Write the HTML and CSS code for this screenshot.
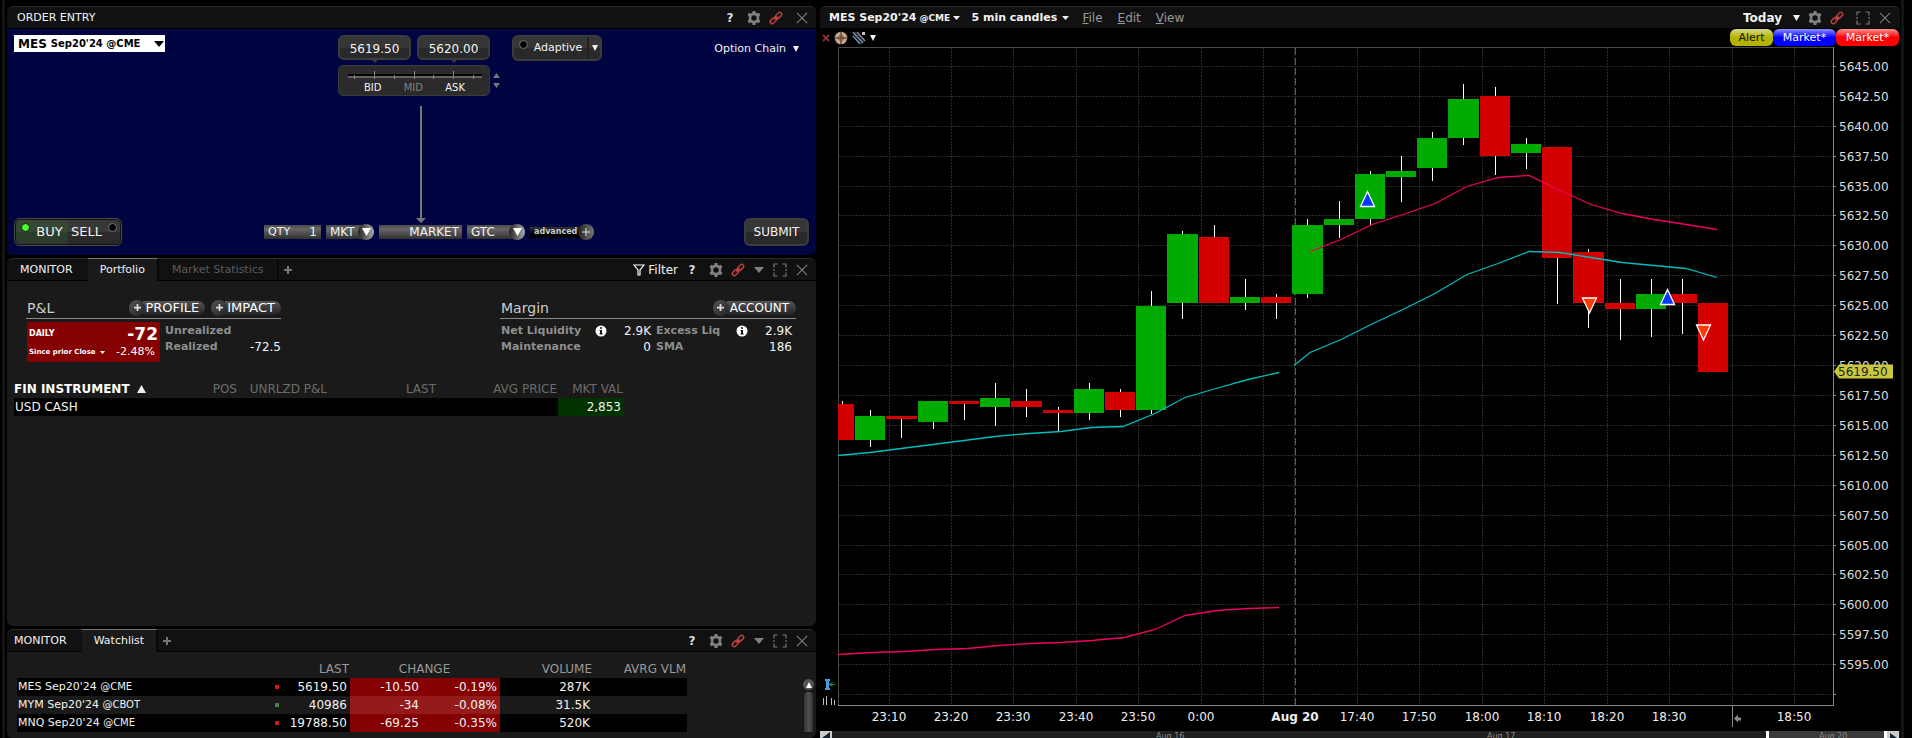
FILE: index.html
```html
<!DOCTYPE html>
<html lang="en">
<head>
<meta charset="utf-8">
<title>Trading workspace</title>
<link rel="stylesheet" href="styles.css">
</head>
<body>
<svg class="defs" aria-hidden="true">
  <defs>
    <symbol id="gear" viewBox="0 0 14 14">
      <path d="M5.600 0h2.800l.4 1.900 1.200.6 1.800-.8 1.600 2.200-1.200 1.500v3.200l1.200 1.500-1.600 2.200-1.800-.8-1.200.6-.4 1.900H5.600l-.4-1.900-1.200-.6-1.800.8L.6 10.100l1.200-1.500V5.400L.6 3.900l1.600-2.200 1.800.8 1.200-.6zM7 4.300a2.700 2.700 0 1 0 0 5.400 2.700 2.700 0 0 0 0-5.400z" fill="#808080" fill-rule="evenodd"/>
    </symbol>
    <symbol id="link" viewBox="0 0 14 14">
      <g fill="none" stroke="#d04444" stroke-width="1.300">
        <rect x="-3.600" y="-2" width="7.200" height="4" rx="2" transform="translate(9.600 4.400) rotate(-45)"/>
        <rect x="-3.600" y="-2" width="7.200" height="4" rx="2" transform="translate(4.400 9.600) rotate(-45)"/>
        <path d="M5.200 8.800l3.600-3.600"/>
      </g>
    </symbol>
    <symbol id="expand" viewBox="0 0 14 14">
      <path d="M1 4.500V1h3.500M9.500 1H13v3.500M13 9.500V13H9.500M4.500 13H1V9.500M1 6v2M13 6v2" fill="none" stroke="#777" stroke-width="1.200"/>
    </symbol>
    <symbol id="close" viewBox="0 0 14 14">
      <path d="M1 1l12 12M13 1L1 13" fill="none" stroke="#808080" stroke-width="1.200"/>
    </symbol>
    <symbol id="down" viewBox="0 0 10 6" preserveAspectRatio="none"><path d="M0 0h10L5 6z" fill="currentColor"/></symbol>
    <symbol id="up" viewBox="0 0 10 8" preserveAspectRatio="none"><path d="M0 8h10L5 0z" fill="currentColor"/></symbol>
    <symbol id="plus" viewBox="0 0 8 8"><path d="M4 0v8M0 4h8" stroke="currentColor"/></symbol>
    <symbol id="info" viewBox="0 0 12 12">
      <circle cx="6" cy="6" r="5.500" fill="#fff"/><path d="M5 2.200h2v1.600H5zM4.500 5H7v3.600h.7v1H4.400v-1H5V6h-.5z" fill="#111"/>
    </symbol>
    <symbol id="funnel" viewBox="0 0 12 12">
      <path d="M1 1h10L7 6v5H5V6z" fill="none" stroke="#fff" stroke-width="1.200"/>
    </symbol>
  </defs>
</svg>

<main class="workspace">
  <div class="column">
    <section class="panel order">
      <header class="bar">
        <h2 class="bar-title">ORDER ENTRY</h2>
        <div class="tools">
          <button class="tool help" aria-label="Help">?</button>
          <button class="tool" aria-label="Settings"><svg class="i14"><use href="#gear"/></svg></button>
          <button class="tool" aria-label="Link group"><svg class="i14"><use href="#link"/></svg></button>
          <button class="tool late" aria-label="Close"><svg class="i12"><use href="#close"/></svg></button>
        </div>
      </header>
      <div class="order-body">
        <div class="order-side">
          <div class="contract">
            <label for="contract">MES</label>
            <select id="contract"><option>Sep20'24 @CME</option></select>
            <svg class="tri"><use href="#down"/></svg>
          </div>
          <div class="sides">
            <button class="side buy"><span class="dot on"></span>BUY</button>
            <button class="side sell">SELL<span class="dot"></span></button>
          </div>
        </div>

        <div class="order-main">
          <div class="quote-row">
            <div class="ladder">
              <div class="prices">
                <button class="price">5619.50</button>
                <button class="price">5620.00</button>
              </div>
              <div class="scale">
                <svg class="scale-line" viewBox="0 0 134 9">
                  <path d="M0 4h134" stroke="#000" stroke-width="2"/>
                  <path d="M0 6h134" stroke="#777" stroke-width="1.500"/>
                  <path d="M26.500 0v8M66.500 0v8M105.500 0v8M6.500 4v4M46.500 4v4M85.500 4v4M125.500 4v4" stroke="#888"/>
                </svg>
                <div class="marks"><span>BID</span><span class="dim">MID</span><span>ASK</span></div>
              </div>
            </div>
            <div class="stepper">
              <button aria-label="Raise price"><svg class="step"><use href="#up"/></svg></button>
              <button aria-label="Lower price"><svg class="step"><use href="#down"/></svg></button>
            </div>
            <div class="algo">
              <button class="algo-name"><span class="dot"></span>Adaptive</button>
              <button class="algo-more" aria-label="Choose algo"><svg class="tri-s"><use href="#down"/></svg></button>
            </div>
          </div>
          <div class="pointer"><span class="shaft"></span><svg class="head"><use href="#down"/></svg></div>
          <div class="params">
            <div class="field qty"><label for="qty">QTY</label><input id="qty" value="1"></div>
            <div class="field type"><select aria-label="Order type"><option>MKT</option></select><span class="knob"><svg class="tri"><use href="#down"/></svg></span></div>
            <div class="field limit"><input aria-label="Price" value="MARKET"></div>
            <div class="field tif"><select aria-label="Time in force"><option>GTC</option></select><span class="knob"><svg class="tri"><use href="#down"/></svg></span></div>
            <button class="advanced"><span>advanced</span><span class="knob plain"><svg class="plus"><use href="#plus"/></svg></span></button>
          </div>
        </div>

        <div class="order-side end">
          <button class="chain">Option Chain <svg class="tri-s"><use href="#down"/></svg></button>
          <button class="submit">SUBMIT</button>
        </div>
      </div>
    </section>

    <section class="panel portfolio">
      <header class="bar tabs">
        <h2 class="bar-title mon-a">MONITOR</h2>
        <button class="tab active">Portfolio</button>
        <button class="tab">Market Statistics</button>
        <button class="add" aria-label="Add tab"><svg class="plus"><use href="#plus"/></svg></button>
        <div class="tools">
          <button class="filter"><svg class="i12"><use href="#funnel"/></svg>Filter</button>
          <button class="tool help" aria-label="Help">?</button>
          <button class="tool" aria-label="Settings"><svg class="i14"><use href="#gear"/></svg></button>
          <button class="tool" aria-label="Link group"><svg class="i14"><use href="#link"/></svg></button>
          <button class="tool more" aria-label="Menu"><svg class="tri"><use href="#down"/></svg></button>
          <button class="tool" aria-label="Maximize"><svg class="i14"><use href="#expand"/></svg></button>
          <button class="tool" aria-label="Close"><svg class="i12"><use href="#close"/></svg></button>
        </div>
      </header>
      <div class="summary">
        <div class="pnl">
          <div class="sum-head"><h3>P&amp;L</h3>
            <button class="pill"><span class="knob plain"><svg class="plus-s"><use href="#plus"/></svg></span><span class="pill-text">PROFILE</span></button>
            <button class="pill"><span class="knob plain"><svg class="plus-s"><use href="#plus"/></svg></span><span class="pill-text">IMPACT</span></button>
          </div>
          <div class="pnl-body">
            <div class="daily">
              <div class="daily-row"><span>DAILY</span><strong>-72</strong></div>
              <div class="daily-row"><span class="since">Since prior Close <svg class="tri-x"><use href="#down"/></svg></span><em>-2.48%</em></div>
            </div>
            <dl class="facts">
              <dt>Unrealized</dt><dd></dd>
              <dt>Realized</dt><dd>-72.5</dd>
            </dl>
          </div>
        </div>
        <div class="margin">
          <div class="sum-head"><h3>Margin</h3>
            <button class="pill"><span class="knob plain"><svg class="plus-s"><use href="#plus"/></svg></span><span class="pill-text">ACCOUNT</span></button>
          </div>
          <dl class="facts four">
            <dt>Net Liquidity</dt><dd><svg class="i12"><use href="#info"/></svg>2.9K</dd>
            <dt>Excess Liq</dt><dd><svg class="i12"><use href="#info"/></svg>2.9K</dd>
            <dt>Maintenance</dt><dd>0</dd>
            <dt>SMA</dt><dd>186</dd>
          </dl>
        </div>
      </div>
      <table class="grid positions">
        <colgroup><col class="p1"><col class="p2"><col class="p3"><col class="p4"><col class="p5"><col class="p6"></colgroup>
        <thead><tr><th class="name">FIN INSTRUMENT <svg class="sort"><use href="#up"/></svg></th><th>POS</th><th>UNRLZD P&amp;L</th><th>LAST</th><th>AVG PRICE</th><th>MKT VAL</th></tr></thead>
        <tbody><tr class="dark"><td class="name">USD CASH</td><td></td><td></td><td></td><td></td><td class="val">2,853</td></tr></tbody>
      </table>
    </section>

    <section class="panel watch">
      <header class="bar tabs">
        <h2 class="bar-title mon-b">MONITOR</h2>
        <button class="tab active">Watchlist</button>
        <button class="add" aria-label="Add tab"><svg class="plus"><use href="#plus"/></svg></button>
        <div class="tools">
          <button class="tool help" aria-label="Help">?</button>
          <button class="tool" aria-label="Settings"><svg class="i14"><use href="#gear"/></svg></button>
          <button class="tool" aria-label="Link group"><svg class="i14"><use href="#link"/></svg></button>
          <button class="tool more" aria-label="Menu"><svg class="tri"><use href="#down"/></svg></button>
          <button class="tool" aria-label="Maximize"><svg class="i14"><use href="#expand"/></svg></button>
          <button class="tool" aria-label="Close"><svg class="i12"><use href="#close"/></svg></button>
        </div>
      </header>
      <div class="watch-body">
        <table class="grid quotes">
          <colgroup><col class="w1"><col class="w2"><col class="w3"><col class="w4"><col class="w5"><col class="w6"><col class="w7"></colgroup>
          <thead><tr><th></th><th></th><th>LAST</th><th colspan="2" class="mid">CHANGE</th><th>VOLUME</th><th>AVRG VLM</th></tr></thead>
          <tbody>
            <tr class="dark"><td class="name">MES Sep20'24 <small>@CME</small></td><td><i class="tick"></i></td><td>5619.50</td><td class="neg">-10.50</td><td class="neg">-0.19%</td><td>287K</td><td></td></tr>
            <tr><td class="name">MYM Sep20'24 <small>@CBOT</small></td><td><i class="tick upt"></i></td><td>40986</td><td class="neg">-34</td><td class="neg">-0.08%</td><td>31.5K</td><td></td></tr>
            <tr class="dark"><td class="name">MNQ Sep20'24 <small>@CME</small></td><td><i class="tick"></i></td><td>19788.50</td><td class="neg">-69.25</td><td class="neg">-0.35%</td><td>520K</td><td></td></tr>
          </tbody>
        </table>
        <div class="vscroll"><button aria-label="Scroll up"><svg class="tri-s"><use href="#up"/></svg></button><span></span></div>
      </div>
    </section>
  </div>

  <section class="chart">
    <header class="bar chart-bar">
      <div class="pick sym"><label for="sym">MES Sep20'24</label><select id="sym"><option>@CME</option></select><svg class="tri-m"><use href="#down"/></svg></div>
      <div class="pick period"><select aria-label="Bar size"><option>5 min candles</option></select><svg class="tri-m"><use href="#down"/></svg></div>
      <nav class="menu"><a href="#file"><u>F</u>ile</a><a href="#edit"><u>E</u>dit</a><a href="#view"><u>V</u>iew</a></nav>
      <div class="tools">
        <div class="pick today"><select aria-label="Range"><option>Today</option></select><svg class="tri-m"><use href="#down"/></svg></div>
        <button class="tool" aria-label="Settings"><svg class="i14"><use href="#gear"/></svg></button>
        <button class="tool" aria-label="Link group"><svg class="i14"><use href="#link"/></svg></button>
        <button class="tool late" aria-label="Maximize"><svg class="i14"><use href="#expand"/></svg></button>
        <button class="tool" aria-label="Close"><svg class="i12"><use href="#close"/></svg></button>
      </div>
    </header>
    <div class="chart-tools">
      <button class="mini" aria-label="Clear drawings"><svg class="clear" viewBox="0 0 6 6"><path d="M0 0l6 6M6 0L0 6" stroke="#8a3030" stroke-width="1.800"/></svg></button>
      <button class="mini" aria-label="Crosshair"><svg class="i14" viewBox="0 0 14 14"><circle cx="7" cy="7" r="6.300" fill="#c9a486"/><path d="M7 1v12M1 7h12" stroke="#3a2a20"/><circle cx="7" cy="7" r="2.500" fill="none" stroke="#6a5040"/></svg></button>
      <button class="mini" aria-label="Draw lines"><svg class="i14" viewBox="0 0 14 14"><path d="M1 1l10 11M5 1l8 9M1 5l7 8" stroke="#8494a4" stroke-width="1.300"/><path d="M3 1l9 10M1 3l9 10" stroke="#34424e"/><path d="M10 1h3v3h-3z" fill="#d8b8b8"/></svg></button>
      <button class="mini" aria-label="More tools"><svg class="tri-s"><use href="#down"/></svg></button>
      <div class="quick">
        <button class="alert">Alert</button><button class="bid">Market*</button><button class="ask">Market*</button>
      </div>
    </div>
    <svg class="plot" viewBox="820 47 1080 684" preserveAspectRatio="xMinYMin meet" role="img" aria-label="MES five minute candles">
      <g class="gridlines">
        <path d="M838 66.500H1833M838 96.500H1833M838 126.500H1833M838 156.500H1833M838 186.500H1833M838 215.500H1833M838 245.500H1833M838 275.500H1833M838 305.500H1833M838 335.500H1833M838 365.500H1833M838 395.500H1833M838 425.500H1833M838 455.500H1833M838 485.500H1833M838 515.500H1833M838 545.500H1833M838 574.500H1833M838 604.500H1833M838 634.500H1833M838 664.500H1833M838 694.500H1833"/>
        <path d="M889.500 48V705M951.500 48V705M1013.500 48V705M1076.500 48V705M1138.500 48V705M1201.500 48V705M1263.500 48V705M1294.500 48V705M1357.500 48V705M1419.500 48V705M1482.500 48V705M1544.500 48V705M1607.500 48V705M1669.500 48V705M1732.500 48V705M1794.500 48V705"/>
      </g>
      <path class="session" d="M1295.500 48V705"/>
      <path class="frame" d="M838.500 705V47.500H1833"/>
      <path class="axis" d="M838 705.500H1833.500V47M1732.500 705V727"/>
      <path class="axis" d="M1834 66.500h2M1834 96.500h2M1834 126.500h2M1834 156.500h2M1834 186.500h2M1834 215.500h2M1834 245.500h2M1834 275.500h2M1834 305.500h2M1834 335.500h2M1834 365.500h2M1834 395.500h2M1834 425.500h2M1834 455.500h2M1834 485.500h2M1834 515.500h2M1834 545.500h2M1834 574.500h2M1834 604.500h2M1834 634.500h2M1834 664.500h2M1834 694.500h2"/>
      <path class="wick" d="M842.500 401V404M870.500 410V447M901.500 416V438M933.500 401V429M964.500 401V420M995.500 383V426M1026.500 389V417M1058.500 407V431M1089.500 383V420M1120.500 389V417M1151.500 291V414M1182.500 231V319M1214.500 225V303M1245.500 279V310M1276.500 294V319M1307.500 219V298M1339.500 201V238M1370.500 171V225M1401.500 156V202M1432.500 132V181M1463.500 84V145M1495.500 87V175M1526.500 138V169M1557.500 147V304M1588.500 249V328M1620.500 279V340M1651.500 279V337M1682.500 279V334"/>
      <path class="gain" d="M855 416h30v24h-30zM918 401h30v21h-30zM980 398h30v9h-30zM1074 389h30v24h-30zM1136 306h30v104h-30zM1167 234h31v69h-31zM1230 297h30v6h-30zM1292 225h31v69h-31zM1324 219h30v6h-30zM1355 174h30v45h-30zM1386 171h30v6h-30zM1417 138h30v30h-30zM1448 99h31v39h-31zM1511 144h30v9h-30zM1636 294h30v15h-30z"/>
      <path class="loss" d="M838 404h16v36h-16zM886 416h31v3h-31zM949 401h30v3h-30zM1011 401h31v6h-31zM1043 410h30v3h-30zM1105 392h30v18h-30zM1199 237h30v66h-30zM1261 297h30v6h-30zM1480 96h30v60h-30zM1542 147h30v111h-30zM1573 252h31v51h-31zM1605 303h30v6h-30zM1667 294h30v9h-30zM1698 303h30v69h-30z"/>
      <polyline class="vwap" points="838,455.500 870,452.500 901,448.500 933,444.500 964,440.500 995,436.500 1029,433.500 1061,431.500 1091,427.500 1123,426.500 1155,413.500 1185,397.500 1216,388.500 1248,379.500 1279,372.500"/>
      <polyline class="vwap" points="1294,365.500 1310,352.500 1341,339.500 1372,324 1403,309.500 1435,293.500 1467,274.500 1498,263.500 1529,251.500 1560,252.500 1591,257.500 1622,262.500 1654,265.500 1686,268.500 1717,277.500"/>
      <polyline class="band" points="1310,251.500 1341,239.500 1372,224.500 1403,214.500 1435,203.500 1467,186.500 1498,177.500 1529,175.500 1560,190.500 1591,204.500 1622,213.500 1654,219.500 1686,224.500 1717,229.500"/>
      <polyline class="band" points="838,654.500 873,652.500 904,651.500 936,649.500 968,648.500 999,645.500 1031,643.500 1061,642.500 1092,640.500 1124,637.500 1155,629.500 1185,615.500 1217,610.500 1248,608.500 1279,607.500"/>
      <path class="bought" d="M1367.500 191.500l7 15h-14zM1667.500 289.500l7 15h-14z"/>
      <path class="sold" d="M1582.500 298h14l-7 15zM1696.500 325h14l-7 15z"/>
      <g class="prices-axis">
        <text x="1839" y="71">5645.00</text><text x="1839" y="101">5642.50</text><text x="1839" y="131">5640.00</text><text x="1839" y="161">5637.50</text><text x="1839" y="191">5635.00</text><text x="1839" y="220">5632.50</text><text x="1839" y="250">5630.00</text><text x="1839" y="280">5627.50</text><text x="1839" y="310">5625.00</text><text x="1839" y="340">5622.50</text><text x="1839" y="370">5620.00</text><text x="1839" y="400">5617.50</text><text x="1839" y="430">5615.00</text><text x="1839" y="460">5612.50</text><text x="1839" y="490">5610.00</text><text x="1839" y="520">5607.50</text><text x="1839" y="550">5605.00</text><text x="1839" y="579">5602.50</text><text x="1839" y="609">5600.00</text><text x="1839" y="639">5597.50</text><text x="1839" y="669">5595.00</text>
      </g>
      <path class="tag" d="M1834 371.500l5-7h54v14h-54z"/>
      <text class="tag-text" x="1838" y="376">5619.50</text>
      <g class="times">
        <text x="889" y="721">23:10</text><text x="951" y="721">23:20</text><text x="1013" y="721">23:30</text><text x="1076" y="721">23:40</text><text x="1138" y="721">23:50</text><text x="1201" y="721">0:00</text><text class="day" x="1295" y="721">Aug 20</text><text x="1357" y="721">17:40</text><text x="1419" y="721">17:50</text><text x="1482" y="721">18:00</text><text x="1544" y="721">18:10</text><text x="1607" y="721">18:20</text><text x="1669" y="721">18:30</text><text x="1794" y="721">18:50</text>
      </g>
      <path d="M1734 718.500l4-4v3h3v3h-3v2z" fill="#888"/>
      <path d="M825 679h5v2h-1v7h1v2h-5v-2h1v-7h-1z" fill="#4a9ae0"/>
      <path d="M829 684.500h6M832.500 682.500l-2.500 2 2.500 2" stroke="#18a040" fill="none"/>
      <path d="M823.500 698v7M826.500 696v9M831.500 698v7M834.500 700v5" stroke="#bbb"/>
    </svg>
    <div class="hscroll">
      <button aria-label="Scroll left"><svg viewBox="0 0 12 12" class="i12"><path d="M10 1v10L2 7z" fill="#123"/></svg></button>
      <span class="date first">Aug 16</span><span class="date second">Aug 17</span><span class="window">Aug 20</span>
      <button aria-label="Scroll right"><svg viewBox="0 0 12 12" class="i12"><path d="M3 2v10l7-5z" fill="#123"/></svg></button>
    </div>
  </section>
</main>
</body>
</html>
```
FILE: styles.css
```css
* { box-sizing: border-box; }
body {
  margin: 0;
  background: #000;
  color: #f2f2f2;
  font: 12px/16px "DejaVu Sans", Verdana, sans-serif;
}
button, input, select {
  margin: 0; padding: 0; border: 0;
  background: none; color: inherit; font: inherit;
  appearance: none; border-radius: 0; outline: 0;
}
button { display: flex; align-items: center; justify-content: center; }
h2, h3, dl, dd { margin: 0; font-weight: normal; }
svg { display: block; flex: none; overflow: visible; }
.defs { position: absolute; width: 0; height: 0; }

.i14 { width: 14px; height: 14px; }
.i12 { width: 12px; height: 12px; }
.tri { width: 10px; height: 6px; }
.tri-m { width: 7px; height: 4px; }
.tri-s { width: 6px; height: 6px; }
.tri-x { width: 5px; height: 3px; }
.plus { width: 8px; height: 8px; stroke-width: 2px; }
.plus-s { width: 7px; height: 7px; stroke-width: 2px; }
.sort { width: 9px; height: 8px; color: #eee; }
.step { width: 7px; height: 5px; color: #777; }

.workspace {
  display: grid;
  grid-template-columns: 809fr 1080fr;
  column-gap: 4px;
  height: 100vh;
  padding: 6px 12px 0 7px;
  overflow: hidden;
  background:
    linear-gradient(#141414, #141414) 2px 0 / 3px 100% no-repeat,
    linear-gradient(#141414, #141414) calc(100% - 8px) 0 / 3px 100% no-repeat,
    #000;
}
.column { display: grid; grid-template-rows: auto 1fr auto; row-gap: 3px; min-width: 0; min-height: 0; }
.panel { border-radius: 6px; overflow: hidden; background: #1a1a1a; display: flex; flex-direction: column; }

.bar {
  display: flex; align-items: center;
  height: 23px;
  background: #111;
  border-top: 1px solid #2c2c2c;
  border-bottom: 1px solid #000;
  border-radius: 6px 6px 0 0;
}
.bar-title { font-size: 11px; line-height: 16px; padding: 0 10px; }
.bar-title.mon-a { padding: 0 15px 0 13px; }
.bar-title.mon-b { padding: 0 15px 0 7px; }
.tabs { align-items: stretch; }
.tabs .bar-title { line-height: 21px; }
.tab { font-size: 11px; color: #5c5c5c; padding: 0 13px; border-right: 2px solid #080808; }
.tab.active { color: #f2f2f2; background: #1a1a1a; border-top: 1px solid #777; padding: 0 12px; margin: -1px 0; }
.add { color: #777; padding: 0 5px; }
.tools { display: flex; align-items: center; margin-left: auto; padding-right: 3px; }
.tool { width: 22px; height: 16px; color: #808080; }
.tool.help { width: 26px; color: #ddd; font-weight: bold; }
.tool.more { width: 20px; }
.tool.late { margin-left: 4px; }
.filter { gap: 3px; margin-right: 1px; }

.order-body {
  display: grid; grid-template-columns: 250fr auto 207fr;
  height: 226px;
  padding: 6px 7px 9px;
  background: #000542;
}
.order-side { display: flex; flex-direction: column; justify-content: space-between; align-items: flex-start; }
.order-side.end { align-items: flex-end; }
.contract {
  display: flex; align-items: center;
  width: 151px; height: 17px; padding: 0 1px 0 4px; gap: 4px;
  background: #fff; color: #000; font-weight: bold;
}
.contract select { flex: 1; min-width: 0; font-size: 10px; }

.sides {
  display: flex; width: 108px; height: 28px; padding: 1px;
  border: 1px solid #4a4a4a; border-radius: 6px; background: #111;
  font-size: 13px;
}
.side { flex: 1; border-radius: 0 4px 4px 0; background: linear-gradient(#383838 50%, #2a2a2a 50%); gap: 6px; }
.side.buy { border-radius: 4px 0 0 4px; background: linear-gradient(#364736 50%, #2b3c2b 50%); }
.dot { width: 9px; height: 9px; border-radius: 50%; background: #000; border: 1px solid #777; align-self: flex-start; margin-top: 3px; flex: none; }
.dot.on { background: #4cff30; border-color: #062006; }

.order-main { display: flex; flex-direction: column; }
.quote-row { display: flex; padding-left: 74px; align-items: flex-start; }
.ladder { width: 152px; }
.prices { display: flex; justify-content: space-between; }
.price, .submit, .algo {
  border: 2px solid #3c3c3c; border-radius: 6px;
  background: linear-gradient(#363636 50%, #292929 50%);
}
.price { position: relative; width: 73px; height: 25px; padding-top: 2px; }
.price::after {
  content: ""; position: absolute; left: 50%; top: 100%; margin-left: -4px;
  border: 4px solid transparent; border-top-color: #3c3c3c; border-bottom: 0;
  margin-top: 1px;
}
.scale { margin-top: 5px; height: 31px; border-radius: 5px; background: #2b2b2b; border: 1px solid #3a3a3a; padding: 5px 7px 0 9px; }
.scale-line { width: 100%; height: 9px; }
.marks { display: flex; justify-content: space-between; padding: 0 17px 0 16px; font-size: 10px; }
.marks .dim { color: #808080; }
.stepper { display: flex; flex-direction: column; gap: 5px; padding: 38px 0 0 3px; }
.algo { display: flex; width: 90px; height: 26px; margin-left: 12px; font-size: 11px; }
.algo-name { flex: 1; gap: 6px; }
.algo-more { width: 13px; border-left: 2px solid #222; }

.pointer { flex: 1; width: 10px; margin: 10px 0 1px 152px; display: flex; flex-direction: column; align-items: center; color: #777; }
.shaft { flex: 1; width: 2px; background: #777; }
.head { width: 10px; height: 5px; }

.params { display: flex; align-items: center; height: 16px; margin-bottom: 6px; }
.field { display: flex; align-items: center; height: 14px; background: linear-gradient(#4a4a4a, #666 30%, #303030); }
.field input { min-width: 0; width: 100%; text-align: right; line-height: 14px; height: 14px; }
.field label { font-size: 11px; }
.field select { flex: 1; height: 14px; line-height: 14px; min-width: 0; }
.qty { width: 57px; padding: 0 4px; margin-right: 5px; }
.type { width: 40px; padding-left: 4px; margin-right: 13px; }
.limit { width: 83px; padding-right: 3px; margin-right: 5px; }
.tif { width: 50px; padding-left: 4px; margin-right: 13px; }
.knob {
  width: 16px; height: 16px; border-radius: 50%; flex: none;
  display: flex; align-items: center; justify-content: center;
  background: linear-gradient(90deg, #222, #aaa); color: #fff; margin-right: -8px;
}
.knob .tri { width: 9px; height: 8px; }
.knob.plain { background: linear-gradient(135deg, #555, #222); color: #ddd; margin: 0; }
.advanced { height: 14px; font-size: 8px; font-weight: bold; color: #ccc; }
.advanced > span:first-child { background: linear-gradient(#333, #000 60%); padding: 0 3px 0 4px; height: 11px; line-height: 9px; }
.advanced .knob { margin-left: -2px; background: linear-gradient(90deg, #222, #777); }
.advanced .plus { stroke-width: 1px; }
.chain { font-size: 11px; gap: 7px; padding: 6px 10px 0 0; }
.submit { width: 65px; height: 28px; }

.summary { display: flex; justify-content: space-between; padding: 16px 20px 0 19px; }
.pnl { width: 255px; }
.margin { width: 296px; }
.sum-head { display: flex; align-items: center; gap: 6px; height: 22px; border-bottom: 1px solid #888; color: #ccc; }
.sum-head h3 { flex: 1; padding-left: 1px; }
.pill { color: #fff; height: 16px; }
.pill-text { height: 14px; line-height: 14px; padding: 0 7px 0 3px; margin-left: -2px; border-radius: 0 7px 7px 0; background: linear-gradient(#555, #222); }
.pnl .pill-text { font-size: 13px; padding: 0 6px 0 2px; }
.pill .knob { z-index: 1; }
.pnl-body { display: flex; padding: 3px 0 0 1px; }
.daily { width: 133px; height: 40px; padding: 3px 2px 0; background: #850000; color: #fff; font-weight: bold; font-size: 8px; }
.daily-row { display: flex; justify-content: space-between; align-items: center; height: 18px; }
.daily-row span { display: flex; align-items: center; gap: 4px; }
.daily-row .since { font-size: 7px; }
.daily-row strong { font-size: 17px; }
.daily-row em { font: 11px/16px "DejaVu Sans", Verdana, sans-serif; padding-right: 3px; }
.facts { display: grid; grid-template-columns: auto 1fr; flex: 1; padding-left: 5px; }
.facts dt { font-size: 11px; font-weight: bold; color: #8c8f8c; }
.facts dd { display: flex; justify-content: flex-end; align-items: center; gap: 17px; color: #f2f2f2; }
.pnl .facts { align-content: start; padding-top: 1px; }
.facts.four { grid-template-columns: 84px 65px 72px 67px; padding: 4px 0 0 1px; column-gap: 1px; }
.facts.four dt:nth-of-type(even) { padding-left: 4px; }

.grid { border-collapse: collapse; table-layout: fixed; line-height: 18px; }
.grid th, .grid td { padding: 0 3px 0 0; height: 18px; text-align: right; white-space: nowrap; }
.grid th { font-weight: normal; color: #999; padding-right: 1px; }
.grid th.mid { text-align: center; }
.grid .name { text-align: left; padding-left: 1px; }
.grid .dark { background: #000; }
.positions { width: 610px; margin: 18px 0 0 7px; }
.positions th { color: #6c6c6c; }
.positions th.name { color: #fff; font-weight: bold; padding-left: 0; }
.positions .sort { display: inline-block; margin-left: 3px; }
.positions .val { background: #003300; }
.p1 { width: 180px; } .p2 { width: 44px; } .p3 { width: 90px; } .p4 { width: 109px; } .p5 { width: 121px; } .p6 { width: 66px; }

.watch-body { display: flex; justify-content: space-between; padding: 8px 2px 6px 10px; }
.quotes { width: 670px; }
.quotes .name { font-size: 11px; }
.quotes small { font-size: 10px; }
.w1 { width: 255px; } .w2 { width: 10px; } .w3 { width: 68px; } .w4 { width: 72px; } .w5 { width: 78px; } .w6 { width: 93px; } .w7 { width: 94px; }
.neg { background: #951a1a; }
.dark .neg { background: #850000; }
.tick { display: block; width: 4px; height: 4px; margin-left: 3px; background: #d01818; }
.tick.upt { background: #408040; }
.vscroll { width: 11px; display: flex; flex-direction: column; padding-top: 19px; }
.vscroll button { height: 11px; border-radius: 50%; background: #555; color: #fff; }
.vscroll span { flex: 1; margin: 2px 1px 0; border-radius: 4px 4px 0 0; background: linear-gradient(90deg, #333, #505050, #333); }

.chart { display: flex; flex-direction: column; min-width: 0; min-height: 0; overflow: hidden; }
.chart-bar { flex: none; border-bottom: 0; height: 22px; padding-left: 9px; font-weight: bold; }
.chart-bar .tools { padding-right: 4px; }
.pick { display: flex; align-items: center; gap: 3px; font-size: 11px; }
.pick.sym { margin-right: 11px; }
.sym select { font-size: 9px; }
.pick.period { gap: 5px; margin-right: 13px; }
.pick.today { gap: 11px; margin-right: 4px; font-size: 12px; }
.today .tri-m { height: 6px; }
.menu { display: flex; gap: 15px; font-weight: normal; }
.menu a { color: #999; text-decoration: none; }
.chart-tools { display: flex; align-items: center; flex: none; height: 19px; padding: 0 1px 0 3px; gap: 4px; }
.mini { height: 14px; }
.clear { width: 6px; height: 6px; margin-right: 1px; }
.quick { display: flex; margin-left: auto; font-size: 11px; }
.quick button { width: 63px; height: 17px; border-radius: 6px; color: #fff; }
.quick .alert { width: 43px; color: #111; background: linear-gradient(#d8d890, #b4b400 50%); }
.quick .bid { background: linear-gradient(#9090ff, #0000ff 50%); }
.quick .ask { background: linear-gradient(#ff9090, #ff0000 50%); }

.plot { width: 100%; flex: 1; min-height: 0; }
.gridlines { fill: none; stroke: #2a2a2a; stroke-dasharray: 2 1; }
.session { stroke: #5c5c5c; stroke-dasharray: 7 3; }
.frame { fill: none; stroke: #484848; }
.axis { fill: none; stroke: #888; }
.wick { stroke: #fff; }
.gain { fill: #00aa00; }
.loss { fill: #d20000; }
.vwap { fill: none; stroke: #00bcbc; stroke-width: 1.300; }
.band { fill: none; stroke: #f00060; stroke-width: 1.300; }
.bought { fill: #0038ff; stroke: #fff; stroke-width: 1.300; }
.sold { fill: #ff3800; stroke: #fff; stroke-width: 1.300; }
.prices-axis, .times { fill: #ddd; font-size: 12px; }
.times { text-anchor: middle; fill: #eee; }
.times .day { font-weight: bold; }
.tag { fill: #c8c83c; }
.tag-text { fill: #222; font-size: 12px; }

.hscroll { display: flex; flex: none; height: 7px; overflow: hidden; background: #1f1f1f; padding-right: 1px; font-size: 8px; line-height: 12px; color: #888; }
.hscroll button { width: 12px; height: 12px; background: #ccc; }
.date.first { flex: 331; margin-left: 324px; }
.date.second { flex: 279; }
.window { flex: 0 0 121px; background: #3a3a3a; border: solid #fff; border-width: 0 3px; padding-left: 50px; }
```
